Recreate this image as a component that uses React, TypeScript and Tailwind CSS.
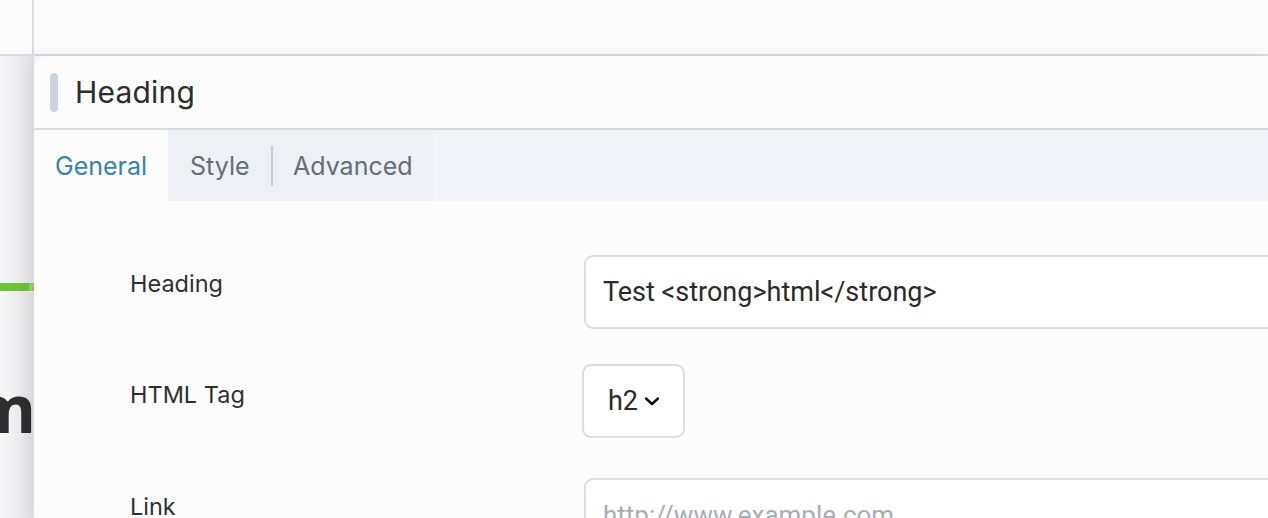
import React from "react";

export default function App() {
  return (
    <div
      className="w-[1268px] h-[518px] overflow-hidden bg-[#fcfcfd] flex flex-col"
      style={{ fontFamily: "Inter, 'Noto Sans', sans-serif" }}
    >
      {/* top bar */}
      <div className="h-[56px] shrink-0 flex border-b-2 border-[#d6dce6]">
        <div className="w-[34px] border-r-2 border-[#d6dce6]" />
        <div className="flex-1" />
      </div>

      <div className="flex flex-1 min-h-0">
        {/* page behind the modal */}
        <div className="w-[34px] shrink-0 bg-gradient-to-r from-[#f7f7f8] to-[#e4e4e8] flex flex-col overflow-hidden">
          <div className="mt-[227px] h-[8px] flex">
            <div className="w-[29px] bg-[#6cc43a]" />
            <div className="w-[5px] bg-[#93d16d]" />
          </div>
          <div
            className="mt-[86px] h-[60px] flex justify-end text-[66px] font-bold leading-[60px] text-[#2e2e2e] overflow-visible"
            style={{ fontFamily: "'Open Sans', sans-serif" }}
          >
            <span className="-mr-[2px]">m</span>
          </div>
        </div>

        {/* modal panel */}
        <div className="flex-1 flex flex-col rounded-tl-[14px] bg-[#fcfcfd] shadow-[-6px_0_18px_rgba(0,0,0,0.07)] overflow-hidden">
          {/* header */}
          <div className="h-[74px] shrink-0 flex items-center border-b-2 border-[#d6dce6]">
            <div className="ml-[16px] w-[8px] h-[39px] rounded-full bg-[#cbd3dc]" />
            <div className="ml-[17px] text-[30px] text-[#2d2d2d] tracking-[0.2px]">Heading</div>
          </div>

          {/* tabs */}
          <div className="h-[71px] shrink-0 flex bg-[#f1f4f8]">
            <div className="w-[134px] flex items-center pl-[21px] pt-[3px] bg-[#fcfcfd] text-[25px] text-[#3783ad]">
              General
            </div>
            <div className="w-[103px] flex items-center pl-[22px] pt-[3px] bg-[#edf1f5] text-[25px] text-[#646d78]">
              Style
            </div>
            <div className="flex items-center bg-[#edf1f5]">
              <div className="w-[2px] h-[40px] bg-[#c4cdd7]" />
            </div>
            <div className="w-[160px] flex items-center pl-[20px] pt-[3px] bg-[#edf1f5] text-[25px] text-[#646d78]">
              Advanced
            </div>
          </div>

          {/* content */}
          <div className="flex flex-col pl-[96px] pt-[54px]">
            <div className="flex items-start h-[74px]">
              <div className="w-[454px] pt-[14px] text-[23.5px] text-[#2f2f2f] leading-[30px]">Heading</div>
              <div
                className="flex-1 h-[74px] flex items-center pl-[17px] rounded-[9px] border-2 border-[#d8dee8] bg-white text-[27px] text-[#2a2a2a] -mr-[10px]"
                style={{ fontFamily: "Roboto, sans-serif" }}
              >
                Test &lt;strong&gt;html&lt;/strong&gt;
              </div>
            </div>

            <div className="flex items-start h-[74px] mt-[35px]">
              <div className="w-[452px] pt-[16px] text-[23.5px] text-[#2f2f2f] leading-[30px]">HTML Tag</div>
              <div
                className="w-[103px] h-[74px] flex items-center pl-[24px] rounded-[9px] border-2 border-[#d8dee8] bg-white text-[27px] text-[#2a2a2a]"
                style={{ fontFamily: "Roboto, sans-serif" }}
              >
                <span>h2</span>
                <svg className="ml-[6px]" width="16" height="10" viewBox="0 0 16 10" fill="none">
                  <path d="M2 2.5 L8 8 L14 2.5" stroke="#111" strokeWidth="2.4" strokeLinecap="round" strokeLinejoin="round" />
                </svg>
              </div>
            </div>

            <div className="flex items-start h-[74px] mt-[40px]">
              <div className="w-[454px] pt-[14px] text-[23.5px] text-[#2f2f2f] leading-[30px]">Link</div>
              <div
                className="flex-1 h-[74px] flex items-center pl-[17px] rounded-[9px] border-2 border-[#d8dee8] bg-white text-[26px] text-[#a8adb4] -mr-[10px]"
                style={{ fontFamily: "Roboto, sans-serif" }}
              >
                http://www.example.com
              </div>
            </div>
          </div>
        </div>
      </div>
    </div>
  );
}
